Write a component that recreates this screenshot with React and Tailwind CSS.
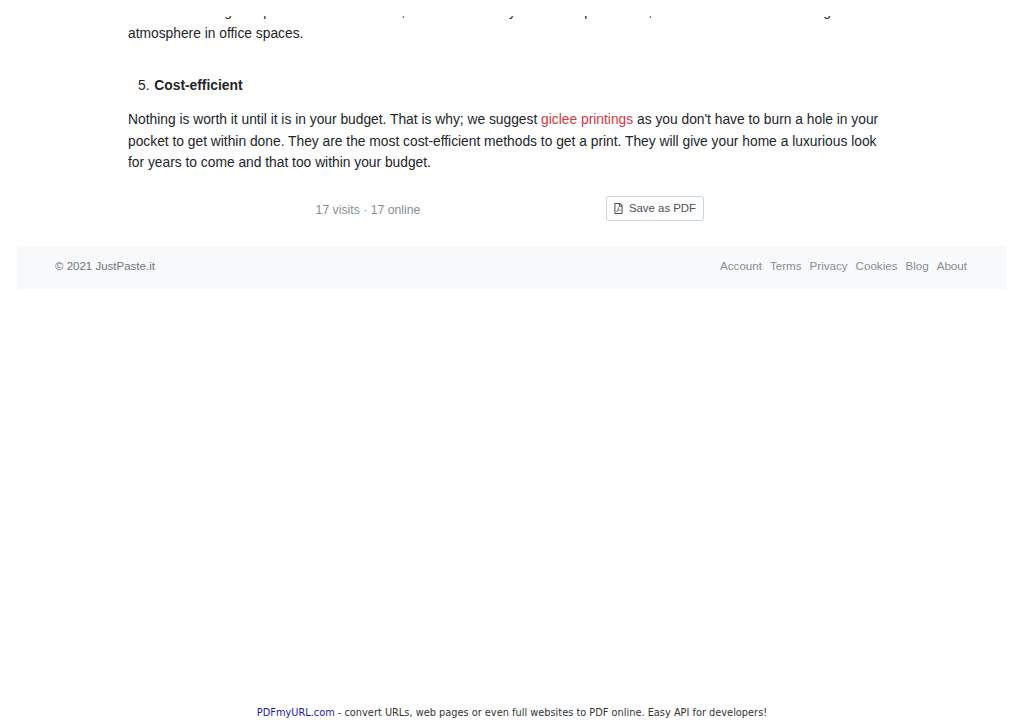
import { FaRegFilePdf } from "react-icons/fa"

// only the descenders of this line show, the rest is cut off by the page break
const clippedLine = [
  ["w-[104px]", "bring"],
  ["w-[39px]", "up"],
  ["w-[134px]", "warm,"],
  ["w-[111px]", "they"],
  ["w-[76px]", "up"],
  ["w-[60px]", "home,"],
  ["w-[179px]", "being"],
]

const footerLinks = ["Account", "Terms", "Privacy", "Cookies", "Blog", "About"]

export default function App() {
  return (
    <div className="flex h-[723px] flex-col overflow-hidden bg-white font-['Liberation_Sans',Arial,sans-serif] text-[13.8px] leading-[21.6px] text-[#212529]">
      <main className="ml-[17px] mr-[18px]">
        <div className="px-[111px]">
          <div className="mt-[16px] h-[7px] overflow-hidden">
            <p className="-mt-[15px] flex whitespace-nowrap">
              {clippedLine.map(([width, word]) => (
                <span key={word} className={`${width} shrink-0 text-right`}>
                  {word}
                </span>
              ))}
            </p>
          </div>
          <p>atmosphere in office spaces.</p>

          <p className="mt-[30px] pl-[10px]">
            5. <strong className="ml-px">Cost-efficient</strong>
          </p>

          <p className="mt-[13px] w-[768px]">
            Nothing is worth it until it is in your budget. That is why; we suggest{" "}
            <a href="#" className="text-[#dc3545]">giclee printings</a> as you don't have to burn a
            hole in your pocket to get within done. They are the most cost-efficient methods to get
            a print. They will give your home a luxurious look for years to come and that too within
            your budget.
          </p>

          <div className="mt-[22px] flex items-center">
            <div className="w-[478px] pl-[2px] pt-[4px] text-center text-[12.25px] text-[#868e96]">
              17 visits · 17 online
            </div>
            <button
              type="button"
              className="flex h-[25px] w-[98px] items-center justify-center gap-[6px] rounded-[3px] border border-[#ced4da] bg-white text-[11.4px] text-[#495057]"
            >
              <FaRegFilePdf className="h-[11px] w-[9px]" />
              Save as PDF
            </button>
          </div>
        </div>

        <footer className="mt-[24px] flex h-[43px] items-center justify-between bg-[#f8f9fa] pb-[2px] pl-[38px] pr-[39px] text-[11.5px] text-[#6c757d]">
          <span className="pt-[2px]">© 2021 JustPaste.it</span>
          <nav className="flex gap-[8px] text-[11.6px] text-[#868e96]">
            {footerLinks.map((link) => (
              <a key={link} href="#">{link}</a>
            ))}
          </nav>
        </footer>
      </main>

      <div className="mt-auto pb-[3px] text-center font-['DejaVu_Sans',sans-serif] text-[9.8px] leading-[14px] text-[#333]">
        <a href="#" className="text-[#1a1aa6]">PDFmyURL.com</a> - convert URLs, web pages or even full websites to PDF online. Easy API for developers!
      </div>
    </div>
  )
}
